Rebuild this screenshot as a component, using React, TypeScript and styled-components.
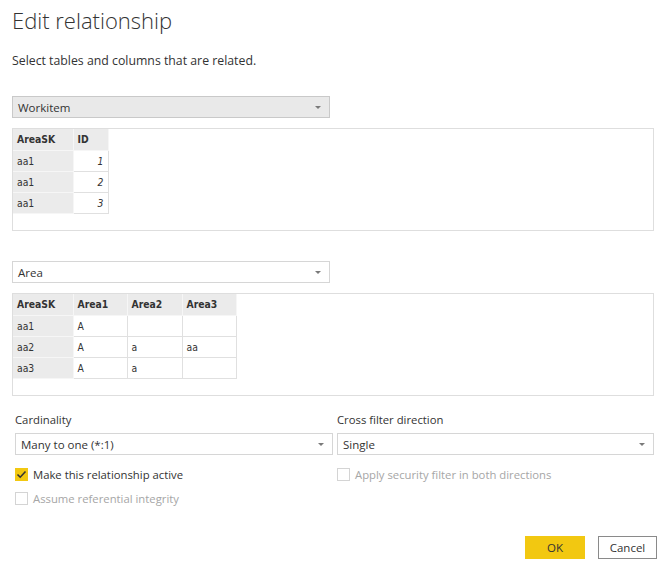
import React from "react";
import styled, { createGlobalStyle, css } from "styled-components";

const Global = createGlobalStyle`
  html, body { margin: 0; padding: 0; background: #ffffff; }
  * { box-sizing: border-box; }
`;

const UI_FONT = `"Open Sans", "Noto Sans", sans-serif`;
const GRID_FONT = `"DejaVu Sans Condensed", "DejaVu Sans", sans-serif`;

const Dialog = styled.div`
  width: 666px;
  height: 567px;
  padding: 0 12px;
  font-family: ${UI_FONT};
  color: #333333;
  overflow: hidden;
`;

const Title = styled.h1`
  margin: 0;
  padding-top: 4px;
  font-family: ${UI_FONT};
  font-weight: 300;
  font-size: 22px;
  line-height: 32px;
  color: #333333;
`;

const Subtitle = styled.p`
  margin: 15px 0 0;
  font-size: 12.3px;
  line-height: 20px;
  color: #333333;
`;

const Select = styled.div<{ $shaded?: boolean; $top: number; $width: number }>`
  margin-top: ${(p) => p.$top}px;
  width: ${(p) => p.$width}px;
  height: 22px;
  display: flex;
  align-items: center;
  justify-content: space-between;
  padding: 0 8px 0 5px;
  font-size: 11.5px;
  color: #333333;
  border: 1px solid ${(p) => (p.$shaded ? "#c9c9c9" : "#d6d6d6")};
  background: ${(p) => (p.$shaded ? "#e9e9e9" : "#ffffff")};
`;

const Caret = styled.span`
  width: 0;
  height: 0;
  border-left: 3px solid transparent;
  border-right: 3px solid transparent;
  border-top: 3px solid #7a7a7a;
`;

const Panel = styled.div`
  margin-top: 10px;
  width: 642px;
  height: 103px;
  border: 1px solid #dedede;
  background: #ffffff;
`;

const Grid = styled.table`
  border-collapse: collapse;
  table-layout: fixed;
  font-family: ${GRID_FONT};
  font-size: 10.3px;
  color: #333333;
`;

const Cell = styled.td<{ $head?: boolean; $shaded?: boolean; $num?: boolean; $w: number }>`
  width: ${(p) => p.$w}px;
  height: 21px;
  padding: 0 4px;
  border-right: 1px solid #e0e0e0;
  border-bottom: 1px solid #e0e0e0;
  background: ${(p) => (p.$shaded || p.$head ? "#ebebeb" : "#ffffff")};
  font-weight: ${(p) => (p.$head ? 700 : 400)};
  text-align: ${(p) => (p.$num ? "right" : "left")};
  font-style: ${(p) => (p.$num ? "italic" : "normal")};
  white-space: nowrap;
  ${(p) =>
    (p.$shaded || p.$head) &&
    css`
      border-color: #f6f6f6;
    `}
`;

const Options = styled.div`
  margin-top: 14px;
  padding-left: 3px;
  display: grid;
  grid-template-columns: 318px 317px;
  column-gap: 4px;
`;

const Column = styled.div`
  display: flex;
  flex-direction: column;
`;

const Label = styled.div`
  font-size: 11.3px;
  line-height: 20px;
  color: #333333;
`;

const CheckRow = styled.label<{ $disabled?: boolean; $top: number }>`
  margin-top: ${(p) => p.$top}px;
  display: flex;
  align-items: center;
  gap: 5px;
  height: 20px;
  font-size: 11.3px;
  color: ${(p) => (p.$disabled ? "#a6a6a6" : "#333333")};
`;

const Box = styled.span<{ $checked?: boolean }>`
  width: 13px;
  height: 13px;
  flex: none;
  display: flex;
  align-items: center;
  justify-content: center;
  background: ${(p) => (p.$checked ? "#f2c811" : "#ffffff")};
  border: 1px solid ${(p) => (p.$checked ? "#f2c811" : "#d4d4d4")};
`;

const Actions = styled.div`
  margin-top: 28px;
  margin-right: -3px;
  display: flex;
  justify-content: flex-end;
  gap: 13px;
`;

const Button = styled.button<{ $primary?: boolean }>`
  height: 23px;
  width: ${(p) => (p.$primary ? 60 : 59)}px;
  padding: 0;
  font-family: ${UI_FONT};
  font-size: 11.5px;
  color: #333333;
  background: ${(p) => (p.$primary ? "#f2c811" : "#ffffff")};
  border: 1px solid ${(p) => (p.$primary ? "#f2c811" : "#8a8a8a")};
`;

const Check = () => (
  <svg width="11" height="11" viewBox="0 0 11 11">
    <path d="M1.5 5.5 L4.2 8.2 L9.5 2.5" fill="none" stroke="#333" strokeWidth="1.6" />
  </svg>
);

type Col = { name: string; w: number; num?: boolean };

const DataTable = ({ cols, rows }: { cols: Col[]; rows: string[][] }) => (
  <Grid>
    <tbody>
      <tr>
        {cols.map((c) => (
          <Cell key={c.name} $head $w={c.w}>
            {c.name}
          </Cell>
        ))}
      </tr>
      {rows.map((r, i) => (
        <tr key={i}>
          {r.map((v, j) => (
            <Cell key={j} $w={cols[j].w} $shaded={j === 0} $num={cols[j].num}>
              {v}
            </Cell>
          ))}
        </tr>
      ))}
    </tbody>
  </Grid>
);

export default function App() {
  return (
    <>
      <Global />
      <Dialog>
        <Title>Edit relationship</Title>
        <Subtitle>Select tables and columns that are related.</Subtitle>

        <Select $shaded $top={25} $width={318}>
          <span>Workitem</span>
          <Caret />
        </Select>
        <Panel>
          <DataTable
            cols={[
              { name: "AreaSK", w: 60 },
              { name: "ID", w: 35, num: true },
            ]}
            rows={[
              ["aa1", "1"],
              ["aa1", "2"],
              ["aa1", "3"],
            ]}
          />
        </Panel>

        <Select $top={30} $width={318}>
          <span>Area</span>
          <Caret />
        </Select>
        <Panel>
          <DataTable
            cols={[
              { name: "AreaSK", w: 60 },
              { name: "Area1", w: 54 },
              { name: "Area2", w: 55 },
              { name: "Area3", w: 54 },
            ]}
            rows={[
              ["aa1", "A", "", ""],
              ["aa2", "A", "a", "aa"],
              ["aa3", "A", "a", ""],
            ]}
          />
        </Panel>

        <Options>
          <Column>
            <Label>Cardinality</Label>
            <Select $top={3} $width={318}>
              <span>Many to one (*:1)</span>
              <Caret />
            </Select>
            <CheckRow $top={9}>
              <Box $checked>
                <Check />
              </Box>
              Make this relationship active
            </CheckRow>
            <CheckRow $top={4} $disabled>
              <Box />
              Assume referential integrity
            </CheckRow>
          </Column>
          <Column>
            <Label>Cross filter direction</Label>
            <Select $top={3} $width={317}>
              <span>Single</span>
              <Caret />
            </Select>
            <CheckRow $top={9} $disabled>
              <Box />
              Apply security filter in both directions
            </CheckRow>
          </Column>
        </Options>

        <Actions>
          <Button $primary>OK</Button>
          <Button>Cancel</Button>
        </Actions>
      </Dialog>
    </>
  );
}
